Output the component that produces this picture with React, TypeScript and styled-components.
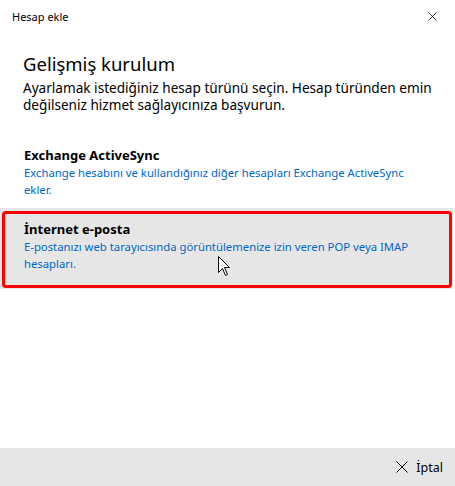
import styled, { createGlobalStyle } from "styled-components";

const GlobalStyle = createGlobalStyle`
    html, body {
        margin: 0;
        padding: 0;
        background: #ffffff;
    }
    body {
        font-family: "Noto Sans", "Open Sans", sans-serif;
        color: #000;
    }
`;

const Dialog = styled.div`
    width: 455px;
    height: 486px;
    display: flex;
    flex-direction: column;
    background: #ffffff;
    overflow: hidden;
`;

const TitleBar = styled.div`
    height: 32px;
    display: flex;
    align-items: center;
    justify-content: space-between;
    padding: 0 18px 0 12px;
    font-size: 11px;
`;

const CloseButton = styled.button`
    border: none;
    background: none;
    padding: 0;
    width: 9px;
    height: 9px;
    display: flex;
    align-items: center;
    justify-content: center;
`;

const Body = styled.div`
    flex: 1;
    display: flex;
    flex-direction: column;
`;

const Heading = styled.h1`
    margin: 19px 0 0 23px;
    font-size: 18.5px;
    font-weight: 400;
    line-height: 26px;
`;

const Intro = styled.p`
    margin: 2px 0 0 23px;
    width: 420px;
    font-size: 13.6px;
    line-height: 17px;
`;

const Options = styled.div`
    margin-top: 24px;
    display: flex;
    flex-direction: column;
`;

const Option = styled.div<{ $selected?: boolean }>`
    position: relative;
    padding: ${(p) => (p.$selected ? "13px 20px 17px 24px" : "10px 20px 10px 24px")};
    background: ${(p) => (p.$selected ? "#e6e6e6" : "transparent")};
    margin-right: ${(p) => (p.$selected ? "2px" : "0")};

    ${(p) =>
        p.$selected &&
        `
        &::after {
            content: "";
            position: absolute;
            left: 2px;
            right: 1px;
            top: 3px;
            bottom: 1px;
            border: 3px solid #ff0000;
            border-radius: 4px;
            pointer-events: none;
        }
    `}
`;

const OptionTitle = styled.div`
    font-size: 13px;
    font-weight: 700;
    line-height: 17px;
`;

const OptionText = styled.div`
    font-size: 11.3px;
    line-height: 17px;
    color: #0067c8;
    width: 400px;
`;

const Cursor = styled.svg`
    position: absolute;
    left: 218px;
    top: 48px;
`;

const Footer = styled.div`
    height: 38px;
    background: #e6e6e6;
    display: flex;
    align-items: center;
    justify-content: flex-end;
    padding-right: 12px;
    gap: 8px;
    font-size: 12.5px;
`;

const CrossIcon = ({ size }: { size: number }) => (
    <svg width={size} height={size} viewBox="0 0 12 12">
        <path d="M0.5 0.5 L11.5 11.5 M11.5 0.5 L0.5 11.5" stroke="#000" strokeWidth="1" fill="none" />
    </svg>
);

const App: React.FC = () => {
    return (
        <>
            <GlobalStyle />
            <Dialog>
                <TitleBar>
                    <span>Hesap ekle</span>
                    <CloseButton type="button" aria-label="Kapat">
                        <CrossIcon size={9} />
                    </CloseButton>
                </TitleBar>
                <Body>
                    <Heading>Gelişmiş kurulum</Heading>
                    <Intro>
                        Ayarlamak istediğiniz hesap türünü seçin. Hesap türünden emin değilseniz hizmet sağlayıcınıza başvurun.
                    </Intro>
                    <Options>
                        <Option>
                            <OptionTitle>Exchange ActiveSync</OptionTitle>
                            <OptionText>
                                Exchange hesabını ve kullandığınız diğer hesapları Exchange ActiveSync ekler.
                            </OptionText>
                        </Option>
                        <Option $selected>
                            <OptionTitle>İnternet e-posta</OptionTitle>
                            <OptionText>
                                E-postanızı web tarayıcısında görüntülemenize izin veren POP veya IMAP hesapları.
                            </OptionText>
                            <Cursor width="13" height="21" viewBox="0 0 13 21">
                                <path
                                    d="M0.5 0.5 L0.5 16.5 L4.5 12.5 L7.5 19.5 L9.5 18.5 L6.5 11.5 L11.5 11.5 Z"
                                    fill="#fff"
                                    stroke="#000"
                                    strokeWidth="1"
                                />
                            </Cursor>
                        </Option>
                    </Options>
                </Body>
                <Footer>
                    <CrossIcon size={12} />
                    <span>İptal</span>
                </Footer>
            </Dialog>
        </>
    );
};

export default App;
